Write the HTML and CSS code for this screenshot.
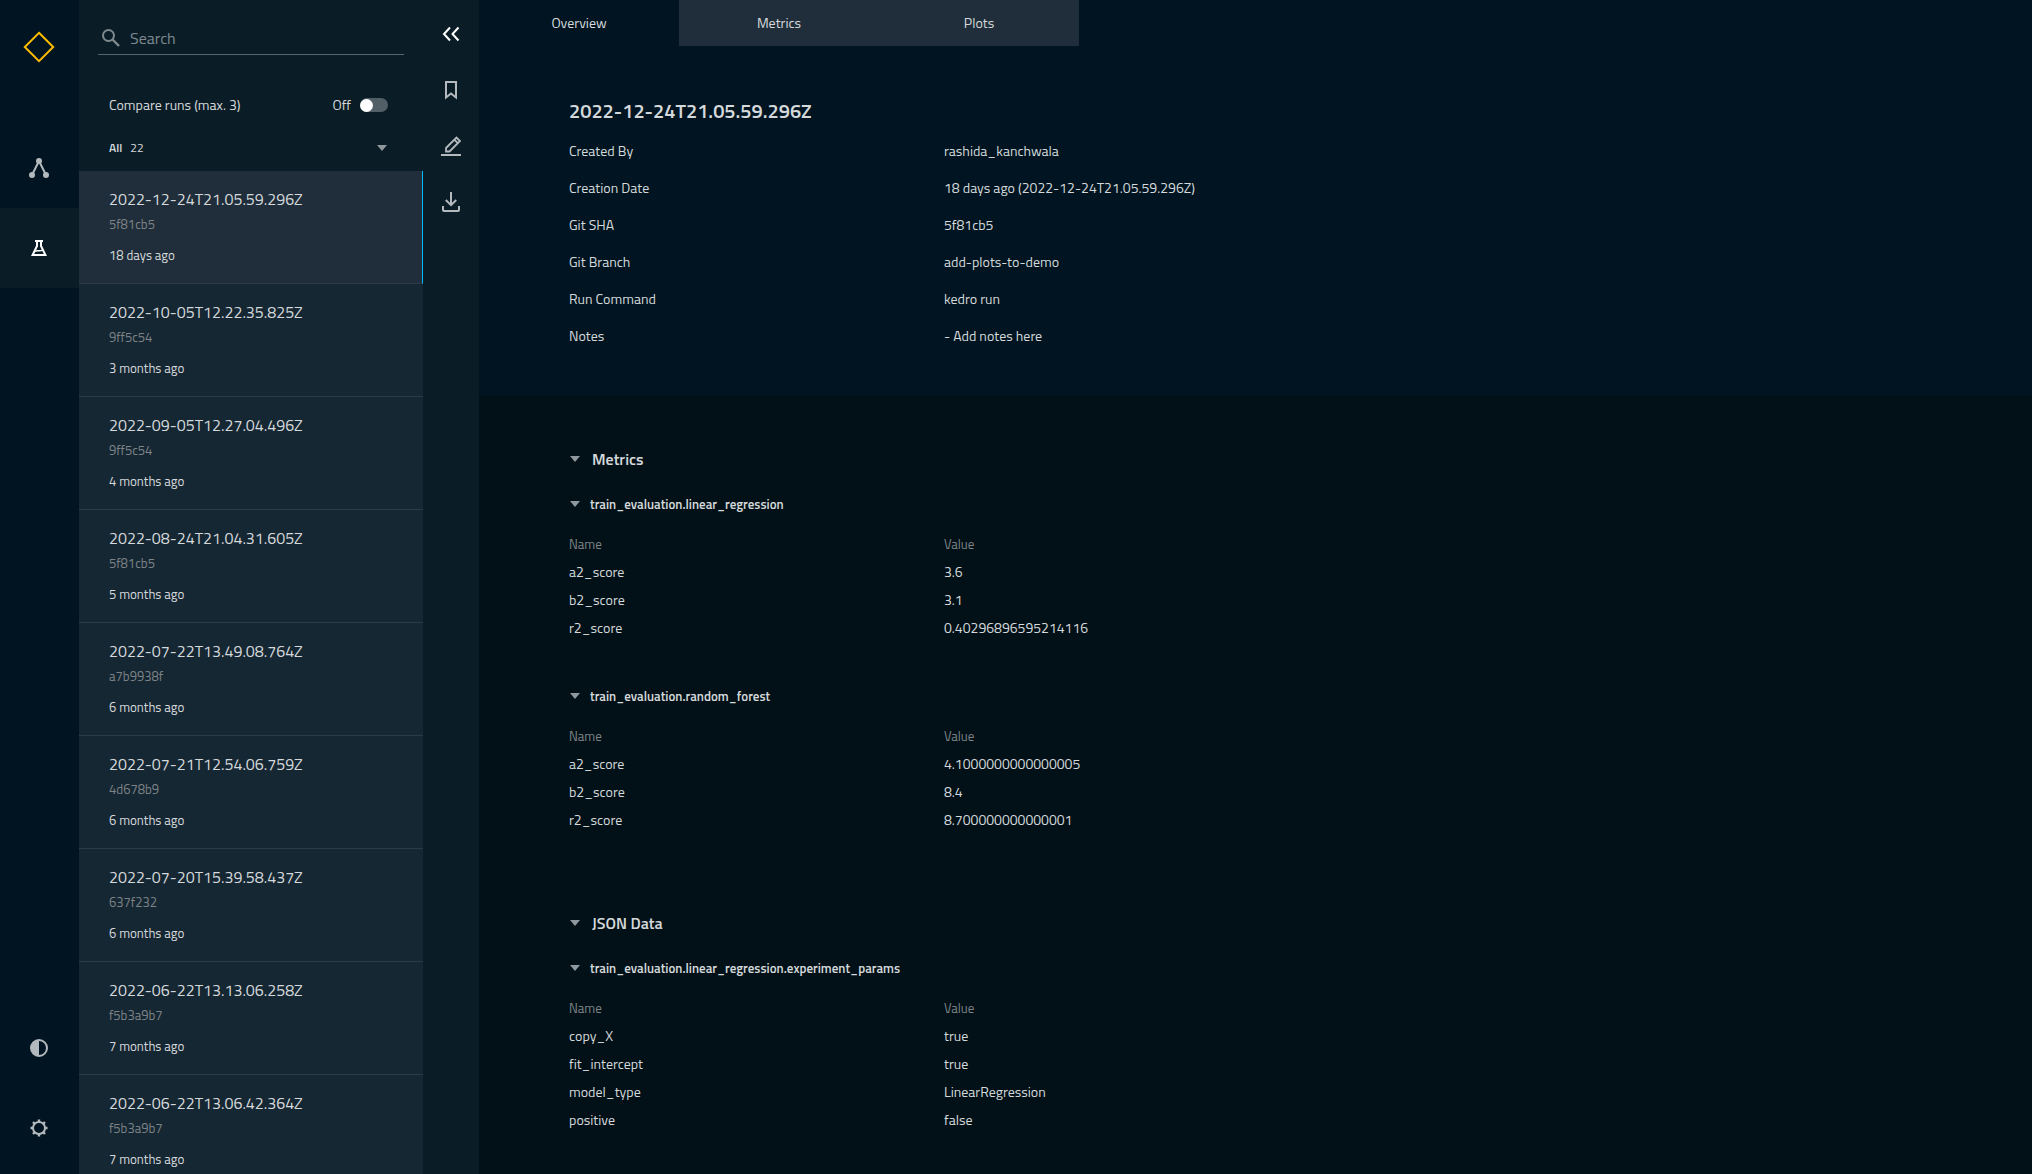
FILE: index.html
```html
<!DOCTYPE html>
<html lang="en">
<head>
<meta charset="utf-8">
<meta name="viewport" content="width=device-width, initial-scale=1">
<title>Experiment tracking</title>
<link rel="stylesheet" href="styles.css">
</head>
<body>
<div class="app">
  <nav class="nav" aria-label="Primary">
    <a class="nav-logo" href="#" aria-label="Home">
      <svg width="32" height="32" viewBox="0 0 32 32" fill="none" stroke="#ffbc00" stroke-width="2"><path d="M16 1.800 30.200 16 16 30.200 1.800 16Z"/></svg>
    </a>
    <a class="nav-link" href="#" aria-label="Flowchart">
      <svg width="20" height="20" viewBox="0 0 20 20"><path d="M10 3 3 17M10 3l7 14" stroke="currentColor" stroke-width="2" fill="none"/><g fill="currentColor"><circle cx="10" cy="3" r="3"/><circle cx="3" cy="17" r="3"/><circle cx="17" cy="17" r="3"/></g></svg>
    </a>
    <a class="nav-link nav-link-active" href="#" aria-label="Experiments" aria-current="page">
      <svg width="16" height="16" viewBox="0 0 16 16" fill="none" stroke="currentColor" stroke-width="2"><path d="M4 1h8M6 1v5L1.600 15h12.800L10 6V1"/><path d="M4 11.500c2.500-2 4.500.5 7.500-1.500" stroke-width="1.500"/></svg>
    </a>
    <div class="nav-bottom">
      <button class="nav-link" type="button" aria-label="Toggle theme">
        <svg width="18" height="18" viewBox="0 0 18 18"><circle cx="9" cy="9" r="8" fill="none" stroke="currentColor" stroke-width="2"/><path d="M9 1a8 8 0 0 0 0 16Z" fill="currentColor"/></svg>
      </button>
      <button class="nav-link" type="button" aria-label="Settings">
        <svg width="18" height="18" viewBox="0 0 18 18"><circle cx="9" cy="9" r="6" fill="none" stroke="currentColor" stroke-width="2"/><path d="M9 .5v2.500M9 15v2.500M.5 9H3M15 9h2.500M3 3l1.800 1.800M13.200 13.200 15 15M3 15l1.800-1.800M13.200 4.800 15 3" stroke="currentColor" stroke-width="2.400"/></svg>
      </button>
    </div>
  </nav>

  <aside class="sidebar">
    <div class="runs">
      <label class="search">
        <svg width="18" height="18" viewBox="0 0 18 18" fill="none" stroke="currentColor" stroke-width="2"><circle cx="6.500" cy="6.500" r="5.500"/><path d="m10.500 10.500 6.500 6.500" stroke-width="2.400"/></svg>
        <input class="search-input" type="text" placeholder="Search" aria-label="Search">
      </label>
      <div class="compare">
        <label for="compare-toggle">Compare runs (max. 3)</label>
        <span class="compare-state">Off</span>
        <input class="toggle" id="compare-toggle" type="checkbox">
      </div>
      <button class="filter" type="button">
        <span class="filter-name">All</span>
        <span>22</span>
        <span class="caret filter-caret"></span>
      </button>
      <ul class="run-list">
        <li class="run run-active"><h2 class="run-title">2022-12-24T21.05.59.296Z</h2><p class="run-sha">5f81cb5</p><p class="run-age">18 days ago</p></li>
        <li class="run"><h2 class="run-title">2022-10-05T12.22.35.825Z</h2><p class="run-sha">9ff5c54</p><p class="run-age">3 months ago</p></li>
        <li class="run"><h2 class="run-title">2022-09-05T12.27.04.496Z</h2><p class="run-sha">9ff5c54</p><p class="run-age">4 months ago</p></li>
        <li class="run"><h2 class="run-title">2022-08-24T21.04.31.605Z</h2><p class="run-sha">5f81cb5</p><p class="run-age">5 months ago</p></li>
        <li class="run"><h2 class="run-title">2022-07-22T13.49.08.764Z</h2><p class="run-sha">a7b9938f</p><p class="run-age">6 months ago</p></li>
        <li class="run"><h2 class="run-title">2022-07-21T12.54.06.759Z</h2><p class="run-sha">4d678b9</p><p class="run-age">6 months ago</p></li>
        <li class="run"><h2 class="run-title">2022-07-20T15.39.58.437Z</h2><p class="run-sha">637f232</p><p class="run-age">6 months ago</p></li>
        <li class="run"><h2 class="run-title">2022-06-22T13.13.06.258Z</h2><p class="run-sha">f5b3a9b7</p><p class="run-age">7 months ago</p></li>
        <li class="run"><h2 class="run-title">2022-06-22T13.06.42.364Z</h2><p class="run-sha">f5b3a9b7</p><p class="run-age">7 months ago</p></li>
      </ul>
    </div>
    <div class="tools">
      <button class="tool tool-bright" type="button" aria-label="Collapse sidebar">
        <svg width="20" height="20" viewBox="0 0 20 20" fill="none" stroke="currentColor" stroke-width="2"><path d="M9 3.500 3 10l6 6.500M17.500 3.500l-6 6.500 6 6.500"/></svg>
      </button>
      <button class="tool" type="button" aria-label="Bookmark run">
        <svg width="20" height="20" viewBox="0 0 20 20" fill="none" stroke="currentColor" stroke-width="2"><path d="M5 2h10v15.500l-5-4-5 4Z"/></svg>
      </button>
      <button class="tool" type="button" aria-label="Edit run">
        <svg width="20" height="20" viewBox="0 0 20 20" fill="none" stroke="currentColor"><path d="M0 19h20" stroke-width="2"/><path d="M5 12 15.500 1.500 19 5 8.500 15.500H5ZM13.300 3.700l3.500 3.500" stroke-width="1.800"/></svg>
      </button>
      <button class="tool" type="button" aria-label="Export run">
        <svg width="20" height="20" viewBox="0 0 20 20" fill="none" stroke="currentColor" stroke-width="2"><path d="M10 0v13M4.800 8l5.200 5.200L15.200 8M2 14v4q0 1 1 1h14q1 0 1-1v-4"/></svg>
      </button>
    </div>
  </aside>

  <main class="main">
    <section class="overview">
      <div class="tabs" role="tablist">
        <button class="tab tab-active" type="button" role="tab" aria-selected="true">Overview</button>
        <button class="tab" type="button" role="tab" aria-selected="false">Metrics</button>
        <button class="tab" type="button" role="tab" aria-selected="false">Plots</button>
      </div>
      <div class="details">
        <h1 class="details-title">2022-12-24T21.05.59.296Z</h1>
        <table class="table table-details">
          <tbody>
            <tr><th scope="row">Created By</th><td>rashida_kanchwala</td></tr>
            <tr><th scope="row">Creation Date</th><td>18 days ago (2022-12-24T21.05.59.296Z)</td></tr>
            <tr><th scope="row">Git SHA</th><td>5f81cb5</td></tr>
            <tr><th scope="row">Git Branch</th><td>add-plots-to-demo</td></tr>
            <tr><th scope="row">Run Command</th><td>kedro run</td></tr>
            <tr><th scope="row">Notes</th><td>- Add notes here</td></tr>
          </tbody>
        </table>
      </div>
    </section>

    <div class="datasets">
      <section class="group">
        <h2 class="group-title"><span class="caret"></span>Metrics</h2>
        <div class="dataset">
          <h3 class="dataset-title"><span class="caret"></span>train_evaluation.linear_regression</h3>
          <table class="table">
            <thead><tr><th scope="col">Name</th><th scope="col">Value</th></tr></thead>
            <tbody>
              <tr><td>a2_score</td><td>3.6</td></tr>
              <tr><td>b2_score</td><td>3.1</td></tr>
              <tr><td>r2_score</td><td>0.40296896595214116</td></tr>
            </tbody>
          </table>
        </div>
        <div class="dataset">
          <h3 class="dataset-title"><span class="caret"></span>train_evaluation.random_forest</h3>
          <table class="table">
            <thead><tr><th scope="col">Name</th><th scope="col">Value</th></tr></thead>
            <tbody>
              <tr><td>a2_score</td><td>4.1000000000000005</td></tr>
              <tr><td>b2_score</td><td>8.4</td></tr>
              <tr><td>r2_score</td><td>8.700000000000001</td></tr>
            </tbody>
          </table>
        </div>
      </section>
      <section class="group">
        <h2 class="group-title"><span class="caret"></span>JSON Data</h2>
        <div class="dataset">
          <h3 class="dataset-title"><span class="caret"></span>train_evaluation.linear_regression.experiment_params</h3>
          <table class="table">
            <thead><tr><th scope="col">Name</th><th scope="col">Value</th></tr></thead>
            <tbody>
              <tr><td>copy_X</td><td>true</td></tr>
              <tr><td>fit_intercept</td><td>true</td></tr>
              <tr><td>model_type</td><td>LinearRegression</td></tr>
              <tr><td>positive</td><td>false</td></tr>
            </tbody>
          </table>
        </div>
      </section>
    </div>
  </main>
</div>
</body>
</html>
```
FILE: styles.css
```css
* { box-sizing: border-box; }

body {
  margin: 0;
  background: #021118;
  color: #d5d9db;
  font: 400 14px/24px "Titillium Web", Roboto, sans-serif;
}

h1, h2, h3, p, ul { margin: 0; padding: 0; font-weight: 400; }
ul { list-style: none; }
svg { display: block; }

button {
  padding: 0;
  border: 0;
  background: none;
  color: inherit;
  font: inherit;
  cursor: pointer;
}

.app {
  display: flex;
  height: 100vh;
  overflow: hidden;
}

.caret {
  flex: none;
  width: 10px;
  height: 6px;
  background: #8f989c;
  clip-path: polygon(0 0, 100% 0, 50% 100%);
}

/* Primary navigation */
.nav {
  display: flex;
  flex: none;
  flex-direction: column;
  width: 79px;
  background: #001521;
  color: #b3b9bd;
}

.nav-logo,
.nav-link {
  display: flex;
  align-items: center;
  justify-content: center;
  width: 100%;
  height: 80px;
  padding: 0 1px 1px 0;
  color: inherit;
}

.nav-logo {
  height: 94px;
  margin-bottom: 34px;
  padding-bottom: 0;
}

.nav-link-active { background: #0a1d27; color: #fff; }
.nav-bottom { margin-top: auto; padding-bottom: 6px; }

/* Run sidebar */
.sidebar {
  display: flex;
  flex: none;
  width: 400px;
  background: #0a1d27;
}

.runs {
  display: flex;
  flex: 1;
  flex-direction: column;
  min-width: 0;
}

.search {
  display: flex;
  align-items: center;
  gap: 10px;
  height: 33px;
  margin: 22px 19px 0;
  padding: 0 4px 0 4px;
  border-bottom: 1px solid #59666d;
  color: #7e888d;
}

.search-input {
  flex: 1;
  min-width: 0;
  padding: 0;
  border: 0;
  outline: 0;
  background: none;
  color: #d5d9db;
  font: inherit;
  font-size: 16px;
}

.search-input::placeholder { color: #7e888d; opacity: 1; }

.compare {
  display: flex;
  align-items: center;
  margin: 38px 35px 0 30px;
}

.compare-state { margin-left: auto; }

.toggle {
  appearance: none;
  display: flex;
  align-items: center;
  width: 28px;
  height: 14px;
  margin: 0 0 0 9px;
  border-radius: 7px;
  background: #525f67;
}

.toggle::before {
  content: "";
  width: 13px;
  height: 13px;
  border-radius: 50%;
  background: #fff;
}

.toggle:checked { justify-content: flex-end; }

.filter {
  display: flex;
  align-items: center;
  gap: 8px;
  margin: 19px 36px 11px 30px;
  font-size: 12px;
}

.filter-name { font-weight: 600; }
.filter-caret { margin-left: auto; }

.run-list {
  flex: 1;
  min-height: 0;
  overflow: hidden;
}

.run {
  padding: 16px 30px;
  border-bottom: 1px solid #2b3b46;
  background: #152733;
}

.run-active {
  border-right: 1px solid #00bcff;
  background: #1f2e3a;
}

.run-title { font-size: 16px; }
.run-sha { margin-top: 1px; color: #7d8386; font-size: 13px; }
.run-age { margin-top: 7px; font-size: 13px; }

.tools {
  display: flex;
  flex: none;
  flex-direction: column;
  width: 56px;
  padding-top: 6px;
  color: #b3b9bd;
}

.tool {
  display: flex;
  align-items: center;
  justify-content: center;
  height: 56px;
}

.tool-bright { color: #fff; }

/* Run details */
.main {
  flex: 1;
  min-width: 0;
  overflow: hidden;
}

.overview { background: #001521; }

.tabs { display: flex; }

.tab {
  width: 200px;
  height: 46px;
  background: #1f2e3a;
  font-size: 14px;
}

.tab-active { background: none; }

.details { padding: 49px 90px 42px; }

.details-title {
  margin-bottom: 5px;
  font-size: 20px;
  font-weight: 600;
  line-height: 32px;
}

.table {
  width: 100%;
  border-spacing: 0;
  table-layout: fixed;
  text-align: left;
}

.table th,
.table td {
  height: 28px;
  padding: 0;
  font-weight: 400;
}

.table th:first-child,
.table td:first-child { width: 375px; }

.table-details th,
.table-details td { height: 37px; }

.table thead { color: #7d8386; font-size: 13px; }

.datasets { padding: 51px 90px 40px; }

.group + .group { margin-top: 77px; }

.group-title {
  display: flex;
  align-items: center;
  gap: 12px;
  padding-left: 1px;
  margin-bottom: 21px;
  font-size: 16px;
  font-weight: 600;
}

.dataset + .dataset { margin-top: 42px; }

.dataset-title {
  display: flex;
  align-items: center;
  gap: 10px;
  padding-left: 1px;
  margin-bottom: 14px;
  font-size: 13px;
  font-weight: 600;
}
```
